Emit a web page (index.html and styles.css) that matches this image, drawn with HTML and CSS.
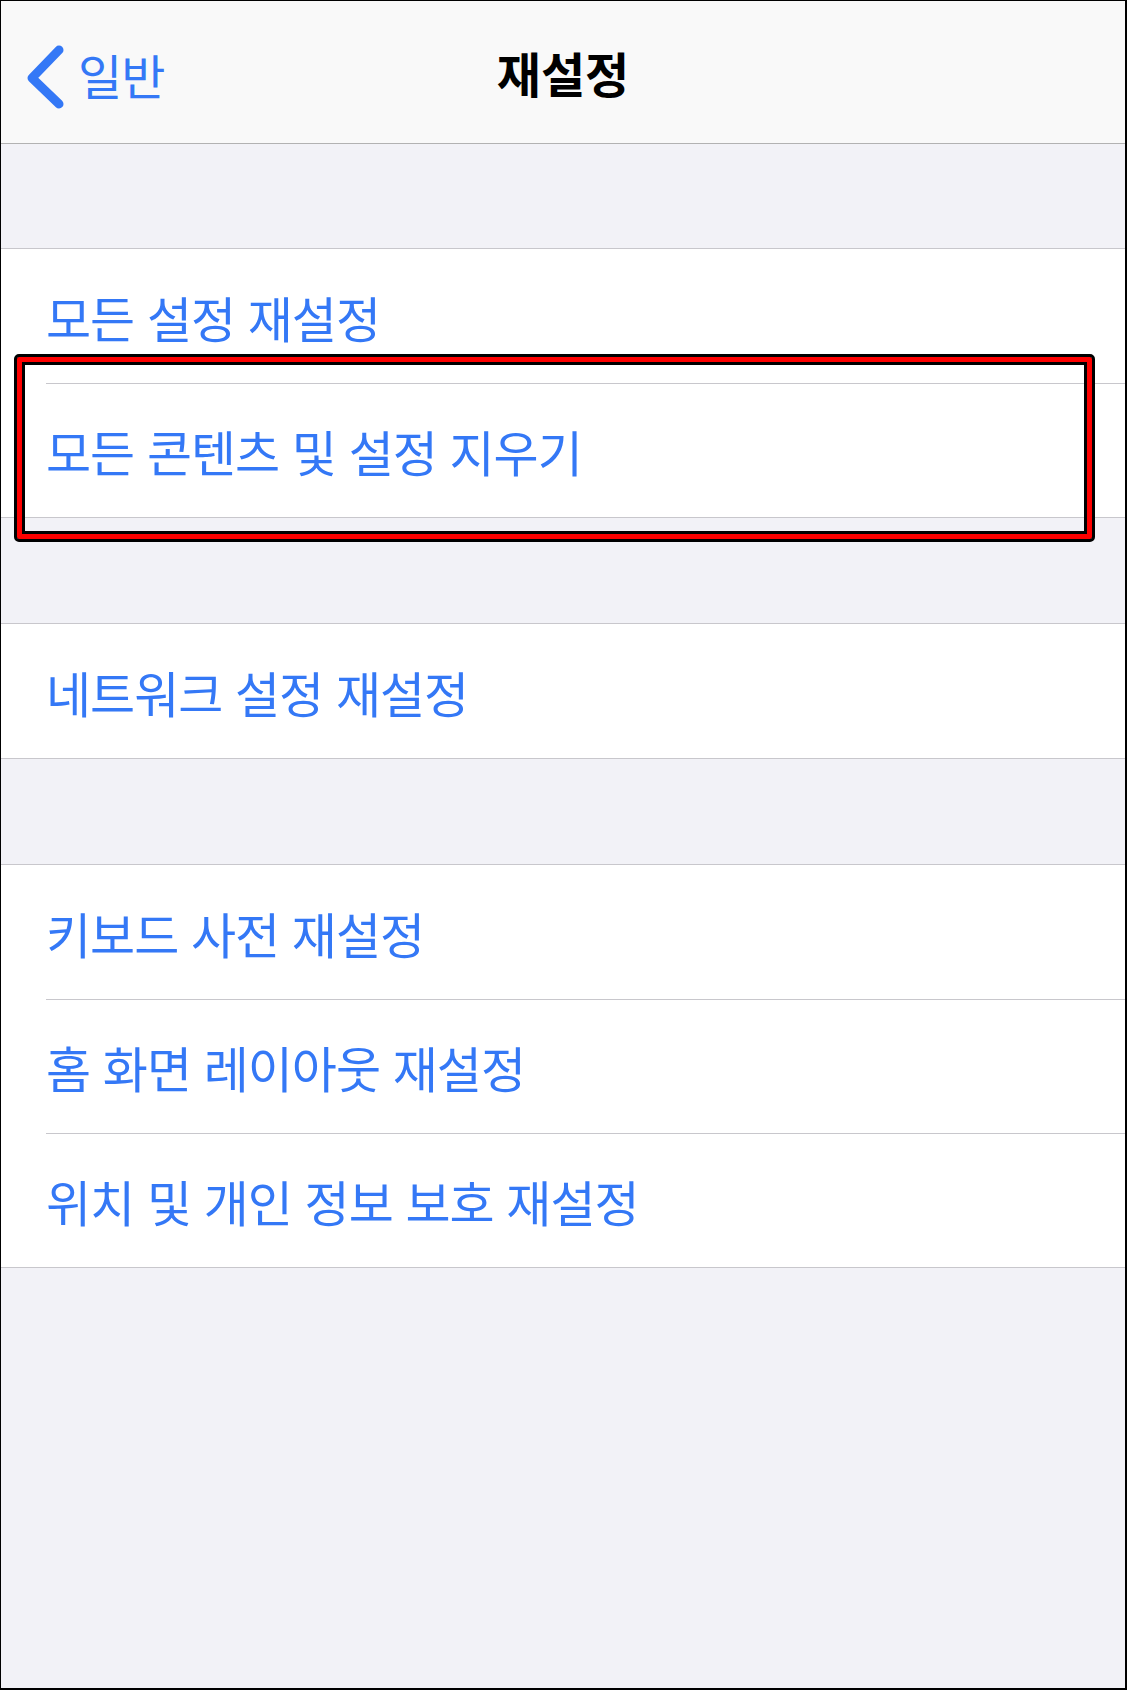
FILE: index.html
```html
<!DOCTYPE html>
<html lang="ko">
<head>
    <meta charset="UTF-8">
    <meta name="viewport" content="width=device-width, initial-scale=1.0">
    <title>재설정</title>
    <link rel="stylesheet" href="styles.css">
</head>
<body>
    <div class="screen">
        <header class="navbar">
            <a class="back" href="#">
                <svg class="chevron" width="44" height="70" viewBox="0 0 44 70">
                    <polyline points="36,9 9,37 36,63" fill="none" stroke="#3478f6" stroke-width="9" stroke-linecap="round" stroke-linejoin="round"/>
                </svg>
                <span>일반</span>
            </a>
            <h1>재설정</h1>
        </header>

        <main class="content">
            <div class="group">
                <div class="row"><span>모든 설정 재설정</span></div>
                <div class="row"><span>모든 콘텐츠 및 설정 지우기</span></div>
                <div class="highlight"></div>
            </div>

            <div class="group">
                <div class="row"><span>네트워크 설정 재설정</span></div>
            </div>

            <div class="group">
                <div class="row"><span>키보드 사전 재설정</span></div>
                <div class="row"><span>홈 화면 레이아웃 재설정</span></div>
                <div class="row"><span>위치 및 개인 정보 보호 재설정</span></div>
            </div>
        </main>
    </div>
</body>
</html>
```

FILE: styles.css
```css
:root {
    --blue: #3478f6;
    --group-bg: #f2f2f7;
    --nav-bg: #f9f9f9;
    --line: #c8c7cc;
}

* {
    box-sizing: border-box;
    margin: 0;
    padding: 0;
}

body {
    font-family: "Noto Sans CJK KR", "Noto Sans", sans-serif;
    background: #fff;
}

.screen {
    width: 1127px;
    height: 1690px;
    border: 1px solid #000;
    border-right-width: 2px;
    border-bottom-width: 2px;
    background: var(--group-bg);
    display: flex;
    flex-direction: column;
}

.navbar {
    height: 143px;
    flex-shrink: 0;
    background: var(--nav-bg);
    border-bottom: 1px solid #b2b2b2;
    display: flex;
    align-items: center;
    justify-content: center;
    position: relative;
}

.navbar h1 {
    font-size: 48px;
    font-weight: 700;
    color: #000;
    margin-top: -1px;
}

.back {
    position: absolute;
    left: 22px;
    top: 40px;
    display: flex;
    align-items: center;
    gap: 11px;
    color: var(--blue);
    text-decoration: none;
    font-size: 48px;
    letter-spacing: -1px;
}

.back span {
    margin-top: -4px;
}

.content {
    padding-top: 104px;
    display: flex;
    flex-direction: column;
    gap: 105px;
}

.group {
    background: #fff;
    border-top: 1px solid var(--line);
    border-bottom: 1px solid var(--line);
    position: relative;
}

.row {
    height: 134px;
    margin-left: 45px;
    display: flex;
    align-items: center;
    color: var(--blue);
    font-size: 49px;
    letter-spacing: -1px;
}

.row + .row {
    border-top: 1px solid var(--line);
}

.highlight {
    position: absolute;
    left: 13px;
    top: 105px;
    width: 1081px;
    height: 188px;
    border: 3px solid #000;
    border-radius: 5px;
    box-shadow: inset 0 0 0 5px #ff0000, inset 0 0 0 8px #000;
}
```
